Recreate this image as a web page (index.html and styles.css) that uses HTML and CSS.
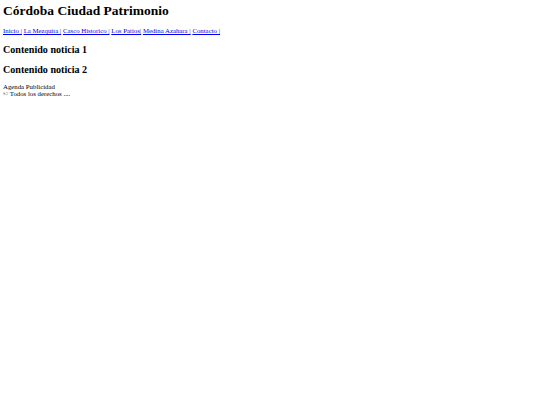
FILE: index.html
```html
<!doctype html>
<html lang="es">

<head>
  <meta charset="utf-8">
  <meta name="viewport" content="width=device-width, initial-scale=1.0">
  <title>Córdoba Ciudad Patrimonio</title>
  <link rel="stylesheet" href="styles.css">
</head>

<body>
  <header>
    <h1>Córdoba Ciudad Patrimonio</h1>
    <nav class="menu">
      <a href="#">Inicio |</a>
      <a href="#">La Mezquita |</a>
      <a href="#">Casco Historico |</a>
      <a href="#">Los Patios|</a>
      <a href="#">Medina Azahara |</a>
      <a href="#">Contacto |</a>
    </nav>
  </header>

  <section class="noticias">
    <article>
      <h2>Contenido noticia 1</h2>
    </article>
    <article>
      <h2>Contenido noticia 2</h2>
    </article>
  </section>

  <aside>Agenda Publicidad</aside>
  <footer>&copy; Todos los derechos ....</footer>
</body>
</html>
```

FILE: styles.css
```css
html {
  font-family: "Liberation Serif", "Times New Roman", serif;
  font-size: 6.8px;
}

body {
  margin: 3px;
  color: #000;
}

h1 {
  font-size: 13.5px;
  margin: 0 0 8px;
}

h2 {
  font-size: 10.1px;
  margin: 9px 0 8px;
}

.menu {
  margin: 8px 0 10px;
}

.menu a {
  color: #00e;
}
```
